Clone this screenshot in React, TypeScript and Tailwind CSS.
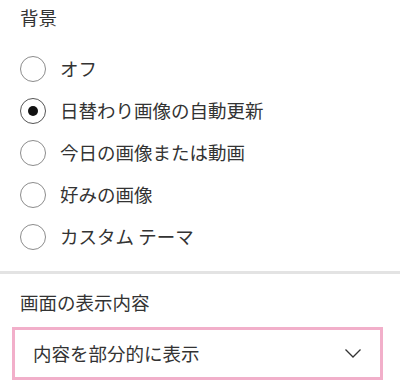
import { useState } from 'react'

const options = ['オフ', '日替わり画像の自動更新', '今日の画像または動画', '好みの画像', 'カスタム テーマ']

export default function App() {
  const [selected, setSelected] = useState(1)

  return (
    <div
      className="w-[400px] h-[386px] bg-white text-[#333] overflow-hidden"
      style={{ fontFamily: '"Noto Sans CJK JP", "Noto Sans", sans-serif' }}
    >
      {/* Background section */}
      <div className="px-[20px] pt-[4px]">
        <h2 className="text-[18.5px] leading-[27px]">背景</h2>
        <div className="mt-[25px] flex flex-col gap-[17px]">
          {options.map((label, i) => (
            <label key={label} className="flex items-center gap-[14px] cursor-pointer h-[25px]">
              <input
                type="radio"
                name="bg"
                checked={selected === i}
                onChange={() => setSelected(i)}
                className="sr-only"
              />
              <span
                className={`w-[26px] h-[26px] rounded-full border-[1.5px] flex items-center justify-center shrink-0 ${
                  selected === i ? 'border-[#555]' : 'border-[#8c8c8c]'
                }`}
              >
                {selected === i && <span className="w-[10px] h-[10px] rounded-full bg-[#111]" />}
              </span>
              <span className="text-[18.5px] leading-[25px]">{label}</span>
            </label>
          ))}
        </div>
      </div>

      <div className="mt-[22px] h-[2.5px] bg-[#e3e3e3]" />

      {/* Display content section */}
      <div className="pt-[15px]">
        <h2 className="px-[20px] text-[18.5px] leading-[27px]">画面の表示内容</h2>
        <button className="mt-[11px] ml-[12px] w-[371px] h-[53px] border-[3px] border-[#f2afca] flex items-center justify-between pl-[18px] pr-[19px] text-left">
          <span className="text-[18.5px] leading-[25px]">内容を部分的に表示</span>
          <svg width="16" height="9" viewBox="0 0 16 9" fill="none" stroke="#333" strokeWidth="1.3">
            <path d="M0.5 0.5 L8 8 L15.5 0.5" />
          </svg>
        </button>
      </div>
    </div>
  )
}
